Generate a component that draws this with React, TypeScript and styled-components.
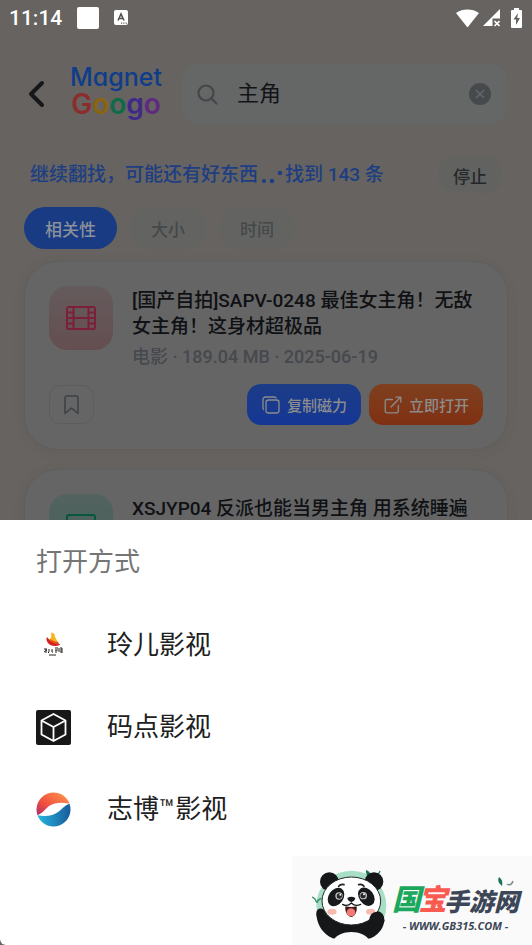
import React from "react";
import styled, { createGlobalStyle } from "styled-components";

const GlobalStyle = createGlobalStyle`
  *, *::before, *::after { box-sizing: border-box; }
  body {
    margin: 0;
    background: #666360;
    font-family: Roboto, "Noto Sans CJK SC", sans-serif;
  }
  button, input { font: inherit; color: inherit; border: 0; background: none; padding: 0; margin: 0; }
  h1, h2, p, ul { margin: 0; padding: 0; font-weight: inherit; list-style: none; }
  svg { display: block; flex: none; }
`;

const Screen = styled.div`
  position: relative;
  height: 100vh;
  overflow: hidden;
`;

const StatusBar = styled.header`
  display: flex;
  align-items: center;
  height: 36px;
  padding: 0 10px 0 9px;
  color: #fff;
`;

const Clock = styled.span`
  font-size: 21px;
  font-weight: 500;
  line-height: 24px;
`;

const NoticeSquare = styled.span`
  width: 22px;
  height: 22px;
  margin: 0 15px;
  border-radius: 2px;
  background: #fff;
`;

const StatusIcons = styled.div`
  display: flex;
  align-items: center;
  gap: 4px;
  margin-left: auto;
  & > svg:last-child { margin-left: 7px; }
`;

const Content = styled.main`
  display: flex;
  flex-direction: column;
  padding: 27px 24px 0;
`;

const SearchHeader = styled.div`
  display: flex;
  align-items: center;
  height: 62px;
`;

const BackButton = styled.button`
  padding: 0 4px;
  color: #15171a;
`;

const Logo = styled.div`
  display: flex;
  flex-direction: column;
  width: 94px;
  margin: 0 18px 0 20px;
  padding-bottom: 6px;
  font-family: Inter, sans-serif;
  font-feature-settings: "cv11";
  line-height: 27px;
  color: #0f3d8c;
  text-align: center;
  white-space: nowrap;
`;

const LogoTop = styled.span`
  font-size: 25px;
  font-weight: 500;
`;

const LogoBottom = styled.span`
  font-size: 28px;
  font-weight: 600;
`;

const Letter = styled.span<{ $color: string }>`
  color: ${(p) => p.$color};
`;

const SearchBox = styled.label`
  display: flex;
  flex: 1;
  align-items: center;
  gap: 19px;
  min-width: 0;
  height: 62px;
  padding: 0 17px 0 16px;
  border-radius: 20px;
  background: #656666;
  color: #43474b;
`;

const SearchInput = styled.input`
  flex: 1;
  min-width: 0;
  font-size: 22px;
  line-height: 32px;
  color: #121417;
  outline: none;
`;

const ClearButton = styled.button`
  display: flex;
  align-items: center;
  justify-content: center;
  width: 22px;
  height: 22px;
  border-radius: 50%;
  background: #464a4d;
  color: #65686a;
`;

const Progress = styled.div`
  display: flex;
  align-items: center;
  justify-content: space-between;
  height: 36px;
  margin-top: 32px;
  padding: 0 7px 0 6px;
`;

const ProgressText = styled.p`
  display: flex;
  align-items: center;
  font-size: 19px;
  font-weight: 500;
  line-height: 28px;
  color: #1d3e82;
  white-space: nowrap;
`;

const StopButton = styled.button`
  height: 36px;
  padding: 0 14px;
  border-radius: 14px;
  background: #626361;
  font-size: 17px;
  font-weight: 500;
  color: #25282b;
`;

const Filters = styled.div`
  display: flex;
  gap: 13px;
  margin-top: 14px;
`;

const Chip = styled.button<{ $active?: boolean }>`
  height: 42px;
  padding: 0 21px;
  border-radius: 21px;
  background: ${(p) => (p.$active ? "#183b83" : "#636462")};
  color: ${(p) => (p.$active ? "#8b909a" : "#45484a")};
  font-size: 17px;
  font-weight: 500;
`;

const Results = styled.div`
  display: flex;
  flex-direction: column;
  gap: 19px;
  margin-top: 12px;
`;

const Card = styled.article`
  padding: 24px;
  border: 1px solid #605f5d;
  border-radius: 34px;
  background: #656565;
  box-shadow: 0 2px 12px rgba(80, 70, 60, 0.1);
`;

const CardTop = styled.div`
  display: flex;
  gap: 19px;
`;

const Thumb = styled.div<{ $tone: "pink" | "teal" }>`
  display: flex;
  flex: none;
  align-items: center;
  justify-content: center;
  width: 64px;
  height: 64px;
  border-radius: 18px;
  background: ${(p) =>
    p.$tone === "pink"
      ? "linear-gradient(#655b5c, #644e51)"
      : "linear-gradient(#536360, #465f59)"};
  color: ${(p) => (p.$tone === "pink" ? "#7c1f38" : "#07563f")};
`;

const Info = styled.div`
  flex: 1;
  min-width: 0;
  padding-top: 2px;
`;

const Title = styled.h2`
  font-size: 19px;
  font-weight: 500;
  line-height: 26px;
  color: #0f1114;
`;

const Meta = styled.p`
  margin-top: 6px;
  font-size: 18px;
  font-weight: 500;
  line-height: 22px;
  color: #46494d;
`;

const Actions = styled.div`
  display: flex;
  align-items: center;
  gap: 8px;
  margin-top: 16px;
`;

const SaveButton = styled.button`
  display: flex;
  align-items: center;
  justify-content: center;
  width: 45px;
  height: 39px;
  margin-right: auto;
  border: 1px solid #5c5d5e;
  border-radius: 11px;
  color: #3d4043;
`;

const ActionButton = styled.button<{ $tone: "blue" | "orange" }>`
  display: flex;
  align-items: center;
  gap: 7px;
  height: 41px;
  padding: 0 14px 0 15px;
  border-radius: 14px;
  background: ${(p) =>
    p.$tone === "blue"
      ? "linear-gradient(#1c3c86, #153795)"
      : "linear-gradient(#7e401f, #803012)"};
  color: #8c8c8d;
  font-size: 15px;
  font-weight: 500;
  white-space: nowrap;
`;

const Sheet = styled.section`
  position: absolute;
  right: 0;
  bottom: 0;
  left: 0;
  padding-bottom: 95px;
  border-bottom-left-radius: 6px;
  background: #fff;
`;

const SheetTitle = styled.h1`
  padding: 0 36px;
  font-size: 26px;
  font-weight: 400;
  line-height: 84px;
  color: #757575;
`;

const AppRow = styled.button`
  display: flex;
  align-items: center;
  gap: 36px;
  width: 100%;
  height: 82px;
  padding: 0 36px;
  font-size: 26px;
  line-height: 34px;
  color: #202020;
  text-align: left;
`;

const Brand = styled.aside`
  position: absolute;
  right: 0;
  bottom: 0;
  display: flex;
  align-items: center;
  width: 240px;
  height: 89px;
  padding-left: 20px;
  background: #fafafa;
`;

const BrandText = styled.div`
  display: flex;
  flex-direction: column;
  align-items: center;
  margin-top: 14px;
  font-style: italic;
  font-weight: 900;
  color: #3d4656;
  white-space: nowrap;
`;

const BrandName = styled.div`
  display: flex;
  align-items: flex-end;
  height: 36px;
  font-size: 25px;
  line-height: 30px;
`;

const BrandGlyph = styled.span<{ $color: string }>`
  width: 26px;
  font-size: 29px;
  line-height: 36px;
  color: ${(p) => p.$color};
`;

const BrandUrl = styled.span`
  font-family: "Open Sans", sans-serif;
  font-size: 11px;
  font-weight: 700;
  line-height: 16px;
`;

const BrandLeaf = styled.svg`
  position: absolute;
  top: 20px;
  right: 16px;
`;

function KeyboardNotice() {
  return (
    <svg width="14" height="16" viewBox="0 0 14 16">
      <rect width="14" height="15" rx="2" fill="#fff" />
      <path d="M4 10.5 7 4l3 6.5M5 8.5h4" fill="none" stroke="#55534f" strokeWidth="1.6" />
      <path d="M7 13.2h1.2M9.3 13.2h1.2M11.6 13.2h1.2" stroke="#66635f" strokeWidth="1.2" />
    </svg>
  );
}

function Wifi() {
  return (
    <svg width="23" height="19" viewBox="0 0 23 19">
      <path d="M0 4C6.500-.6 16.500-.6 23 4L11.500 18.500Z" fill="#fff" />
    </svg>
  );
}

function Signal() {
  return (
    <svg width="17" height="18" viewBox="0 0 17 18">
      <path d="M17 0V9.500H9.500V17H0Z" fill="#fff" />
      <path d="m11.500 12 5 5m0-5-5 5" stroke="#fff" strokeWidth="1.700" />
    </svg>
  );
}

function Battery() {
  return (
    <svg width="11" height="20" viewBox="0 0 11 20">
      <path d="M3 0h5v2h2a1 1 0 0 1 1 1v16a1 1 0 0 1-1 1H1a1 1 0 0 1-1-1V3a1 1 0 0 1 1-1h2Z" fill="#fff" />
      <path d="M7 5 2.500 11.500H5V17l4-7H6.200Z" fill="#66635f" />
    </svg>
  );
}

function Chevron() {
  return (
    <svg width="17" height="28" viewBox="0 0 17 28" fill="none" stroke="currentColor" strokeWidth="4" strokeLinecap="round" strokeLinejoin="round">
      <path d="M14 3 3 14l11 11" />
    </svg>
  );
}

function Magnifier() {
  return (
    <svg width="21" height="21" viewBox="0 0 21 21" fill="none" stroke="currentColor" strokeWidth="2.200" strokeLinecap="round">
      <circle cx="9" cy="9" r="7.500" />
      <path d="m14.500 14.500 5 5" />
    </svg>
  );
}

function Film() {
  return (
    <svg width="30" height="24" viewBox="0 0 30 24" fill="none" stroke="currentColor" strokeWidth="2">
      <rect x="1" y="1" width="28" height="22" rx="2" />
      <path d="M7.500 1v22M22.500 1v22M7.500 12h15M1 6.500h6.500M1 12h6.500M1 17.500h6.500M22.500 6.500H29M22.500 12H29M22.500 17.500H29" />
    </svg>
  );
}

function Monitor() {
  return (
    <svg width="30" height="24" viewBox="0 0 30 24" fill="none" stroke="currentColor" strokeWidth="2" strokeLinecap="round">
      <rect x="1" y="1" width="28" height="17" rx="2" />
      <path d="M9 23h12" />
    </svg>
  );
}

function Bookmark() {
  return (
    <svg width="15" height="20" viewBox="0 0 15 20" fill="none" stroke="currentColor" strokeWidth="1.500" strokeLinejoin="round">
      <path d="M1 3a2 2 0 0 1 2-2h9a2 2 0 0 1 2 2v15.500l-6.500-5.500L1 18.500Z" />
    </svg>
  );
}

function Copy() {
  return (
    <svg width="18" height="18" viewBox="0 0 18 18" fill="none" stroke="currentColor" strokeWidth="1.300" strokeLinecap="round">
      <rect x="4" y="4" width="13" height="13" rx="2.500" />
      <path d="M1.500 13.500A3 3 0 0 1 1 12V3.500A2.500 2.500 0 0 1 3.500 1H12a3 3 0 0 1 2 .800" />
    </svg>
  );
}

function OpenOut() {
  return (
    <svg width="18" height="18" viewBox="0 0 18 18" fill="none" stroke="currentColor" strokeWidth="1.300" strokeLinecap="round" strokeLinejoin="round">
      <path d="M8.500 3.500H3A1.800 1.800 0 0 0 1.200 5.300V15A1.800 1.800 0 0 0 3 16.800h9.500A1.800 1.800 0 0 0 14.300 15V9.500M7 11l9.500-9.800M12 1.200h4.800V6" />
    </svg>
  );
}

function Dots() {
  return (
    <svg width="27" height="20" viewBox="0 0 27 20" fill="currentColor">
      <circle cx="6" cy="16" r="2" />
      <circle cx="14" cy="16" r="2.200" />
      <circle cx="22" cy="8" r="2.200" />
    </svg>
  );
}

function FlameLogo() {
  return (
    <svg width="35" height="35" viewBox="0 0 35 35">
      <path d="M15 5c2-1 4 1 4 4l4 7-3 1-8-5c3-1 4-4 3-7Z" fill="#f6b51d" />
      <path d="M11 9c-2 4 2 9 8 9 3 0 5-1 5-2-5 0-9-2-13-7Z" fill="#d3201f" />
      <path d="M14 11c2 4 5 6 9 5l-1-2c-3 0-5-1-8-3Z" fill="#e9481f" />
      <path d="M8 21h3m-3 3 3-2m-1-1v4m3-4v3l-1 1m4-4v3h1m2-4h3m-3 2h3m-2 0v3m3-5v4m1-4h2v5m-2-3h2m-2 2h2M13 27h7" fill="none" stroke="#27211f" strokeWidth="1" />
    </svg>
  );
}

function CubeLogo() {
  return (
    <svg width="35" height="35" viewBox="0 0 35 35">
      <rect width="35" height="35" rx="2" fill="#181818" />
      <path d="m17.500 4 12 6.500v14l-12 6.500-12-6.500v-14ZM5.500 10.500l12 6.500 12-6.500M17.500 17v14" fill="none" stroke="#fff" strokeWidth="1.800" strokeLinejoin="round" />
    </svg>
  );
}

function WaveLogo() {
  return (
    <svg width="35" height="35" viewBox="0 0 35 35">
      <defs>
        <linearGradient id="warm" x1="0" y1="1" x2="1" y2="0">
          <stop offset="0" stopColor="#a52e70" />
          <stop offset=".35" stopColor="#ef4b3e" />
          <stop offset="1" stopColor="#ff9b4d" />
        </linearGradient>
        <linearGradient id="cool" x1="0" y1="0" x2="1" y2="0">
          <stop offset="0" stopColor="#25b6df" />
          <stop offset="1" stopColor="#185b9b" />
        </linearGradient>
      </defs>
      <path d="M1.500 23.250A17 17 0 0 1 33.500 11.750C27 10 19 10 13 14c-4 3-6 7-11.500 9.250Z" fill="url(#warm)" />
      <path d="M33.500 11.750A17 17 0 0 1 1.500 23.250c8 1.500 16 .5 21-3.500 4-3 6-6.500 11-8Z" fill="url(#cool)" />
    </svg>
  );
}

function Panda() {
  return (
    <svg width="80" height="80" viewBox="0 0 240 240">
      <circle cx="118" cy="134" r="105" fill="#a9dec6" />
      <path d="M0 108c8 3 12 9 12 14m2 4c3-8 8-12 14-14M190 38c6 4 12 0 14-8" fill="none" stroke="#2d8b66" strokeWidth="4" />
      <path d="M162 26c-2 16 8 26 22 28-2-12-10-22-22-28Z" fill="#197453" />
      <circle cx="52" cy="62" r="28" fill="#151719" />
      <circle cx="186" cy="62" r="28" fill="#151719" />
      <path d="M14 168c-8-30 22-34 28-10l20 18h100l12-10c4-20 36-22 42 2 4 24-10 50-40 64-40 10-76 10-114 0C32 218 18 194 14 168Z" fill="#151719" />
      <path d="M62 240c20-36 92-36 112 0Z" fill="#fafafa" />
      <ellipse cx="118" cy="120" rx="88" ry="72" fill="#fff" stroke="#24272a" strokeWidth="3" />
      <ellipse cx="72" cy="108" rx="22" ry="30" transform="rotate(35 72 108)" fill="#17191b" />
      <ellipse cx="163" cy="107" rx="22" ry="30" transform="rotate(-35 163 107)" fill="#17191b" />
      <circle cx="81" cy="105" r="11" fill="#c9cbca" />
      <circle cx="154" cy="104" r="11" fill="#c9cbca" />
      <circle cx="82" cy="105" r="8" fill="#26292b" />
      <circle cx="153" cy="104" r="8" fill="#26292b" />
      <circle cx="85" cy="101" r="3" fill="#fff" />
      <circle cx="156" cy="100" r="3" fill="#fff" />
      <path d="M80 76q6-8 16-5M140 71q10-3 16 5" fill="none" stroke="#222" strokeWidth="5" strokeLinecap="round" />
      <path d="M106 111q12-7 24 0-2 11-12 12-10-1-12-12Z" fill="#17191b" />
      <path d="M92 130q14 8 26-4 12 12 28 4" fill="none" stroke="#17191b" strokeWidth="4" strokeLinecap="round" />
      <path d="M100 136q18 4 34 0c2 18-6 32-16 32s-20-14-18-32Z" fill="#3a1919" />
      <ellipse cx="117" cy="154" rx="13" ry="12" fill="#f17976" />
      <ellipse cx="60" cy="152" rx="14" ry="9" fill="#f8b9b0" />
      <ellipse cx="176" cy="152" rx="14" ry="9" fill="#f8b9b0" />
      <path d="M172 176q2-22 22-24 20 2 24 28l-16 26q-26-6-30-30Z" fill="#151719" />
    </svg>
  );
}

export default function App() {
  return (
    <>
      <GlobalStyle />
      <Screen>
        <StatusBar>
          <Clock>11:14</Clock>
          <NoticeSquare />
          <KeyboardNotice />
          <StatusIcons>
            <Wifi />
            <Signal />
            <Battery />
          </StatusIcons>
        </StatusBar>
        <Content>
          <SearchHeader>
            <BackButton aria-label="返回"><Chevron /></BackButton>
            <Logo>
              <LogoTop>Magnet</LogoTop>
              <LogoBottom>
                <Letter $color="#8b2d2b">G</Letter>
                <Letter $color="#8c6410">o</Letter>
                <Letter $color="#0f6a48">o</Letter>
                <Letter $color="#41288a">g</Letter>
                <Letter $color="#5f2a80">o</Letter>
              </LogoBottom>
            </Logo>
            <SearchBox>
              <Magnifier />
              <SearchInput aria-label="搜索" defaultValue="主角" />
              <ClearButton aria-label="清除">
                <svg width="10" height="10" viewBox="0 0 10 10" stroke="currentColor" strokeWidth="1.500">
                  <path d="m1 1 8 8m0-8-8 8" />
                </svg>
              </ClearButton>
            </SearchBox>
          </SearchHeader>
          <Progress>
            <ProgressText>继续翻找，可能还有好东西<Dots />找到 143 条</ProgressText>
            <StopButton>停止</StopButton>
          </Progress>
          <Filters>
            <Chip $active>相关性</Chip>
            <Chip>大小</Chip>
            <Chip>时间</Chip>
          </Filters>
          <Results>
            <Card>
              <CardTop>
                <Thumb $tone="pink"><Film /></Thumb>
                <Info>
                  <Title>[国产自拍]SAPV-0248 最佳女主角！无敌女主角！这身材超极品</Title>
                  <Meta>电影 · 189.04 MB · 2025-06-19</Meta>
                </Info>
              </CardTop>
              <Actions>
                <SaveButton aria-label="收藏"><Bookmark /></SaveButton>
                <ActionButton $tone="blue"><Copy />复制磁力</ActionButton>
                <ActionButton $tone="orange"><OpenOut />立即打开</ActionButton>
              </Actions>
            </Card>
            <Card>
              <CardTop>
                <Thumb $tone="teal"><Monitor /></Thumb>
                <Info>
                  <Title>XSJYP04 反派也能当男主角 用系统睡遍</Title>
                </Info>
              </CardTop>
            </Card>
          </Results>
        </Content>
        <Sheet aria-labelledby="sheet-title">
          <SheetTitle id="sheet-title">打开方式</SheetTitle>
          <AppRow><FlameLogo />玲儿影视</AppRow>
          <AppRow><CubeLogo />码点影视</AppRow>
          <AppRow><WaveLogo />志博™影视</AppRow>
          <Brand>
            <Panda />
            <BrandText>
              <BrandName>
                <BrandGlyph $color="#19a85c">国</BrandGlyph>
                <BrandGlyph $color="#fa5b50">宝</BrandGlyph>
                手游网
              </BrandName>
              <BrandUrl>- WWW.GB315.COM -</BrandUrl>
            </BrandText>
            <BrandLeaf width="20" height="12" viewBox="0 0 20 12">
              <path d="M3 1c-2 4 0 6 3 9 1-4 0-7-3-9Z" fill="#197453" />
              <path d="M11 8c3 2 5 0 6-3" fill="none" stroke="#7b8d87" strokeWidth="1.500" />
            </BrandLeaf>
          </Brand>
        </Sheet>
      </Screen>
    </>
  );
}
